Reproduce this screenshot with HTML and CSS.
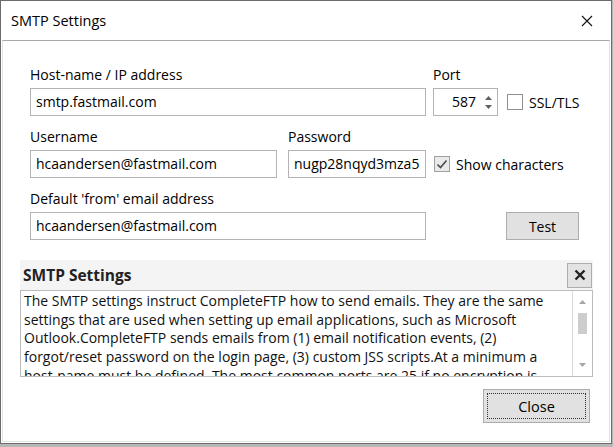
FILE: index.html
```html
<!DOCTYPE html>
<html>
<head>
<meta charset="utf-8">
<link rel="stylesheet" href="styles.css">
</head>
<body>
<div class="window">
  <div class="titlebar">
    <span class="title">SMTP Settings</span>
    <span class="title-close">
      <svg width="12" height="12" viewBox="0 0 12 12"><path d="M1 1 L11 11 M11 1 L1 11" stroke="#111" stroke-width="1.1" fill="none"/></svg>
    </span>
  </div>
  <div class="client">
    <div class="form">
      <div class="row labels">
        <label class="w-wide">Host-name / IP address</label>
        <label class="port-label">Port</label>
      </div>
      <div class="row inputs">
        <div class="field w-wide">smtp.fastmail.com</div>
        <div class="field spinner">
          <span class="spin-val">587</span>
          <span class="spin-arrows">
            <svg width="7" height="4" viewBox="0 0 7 4"><path d="M3.5 0 L7 4 L0 4 Z" fill="#606060"/></svg>
            <svg width="7" height="4" viewBox="0 0 7 4"><path d="M0 0 L7 0 L3.5 4 Z" fill="#606060"/></svg>
          </span>
        </div>
        <span class="check ssl"><span class="box"></span>SSL/TLS</span>
      </div>
      <div class="row labels">
        <label class="w-user">Username</label>
        <label class="pass-label">Password</label>
      </div>
      <div class="row inputs">
        <div class="field w-user">hcaandersen@fastmail.com</div>
        <div class="field w-pass">nugp28nqyd3mza5</div>
        <span class="check show"><span class="box checked"><svg width="12" height="11" viewBox="0 0 12 11"><path d="M1.5 5.5 L4.5 8.5 L10.5 1.5" stroke="#4a4a4a" stroke-width="1.6" fill="none"/></svg></span>Show characters</span>
      </div>
      <div class="row labels">
        <label class="w-wide">Default 'from' email address</label>
      </div>
      <div class="row inputs">
        <div class="field w-wide">hcaandersen@fastmail.com</div>
        <button class="btn test">Test</button>
      </div>
    </div>

    <div class="help">
      <div class="help-head">
        <span class="help-title">SMTP Settings</span>
        <span class="help-x">
          <svg width="12" height="12" viewBox="0 0 12 12"><path d="M1.5 1.5 L10.5 10.5 M10.5 1.5 L1.5 10.5" stroke="#222" stroke-width="2.4" fill="none"/></svg>
        </span>
      </div>
      <div class="help-body">
        <p class="help-text">The SMTP settings instruct CompleteFTP how to send emails. They are the same<br>settings that are used when setting up email applications, such as Microsoft<br>Outlook.CompleteFTP sends emails from (1) email notification events, (2)<br>forgot/reset password on the login page, (3) custom JSS scripts.At a minimum a<br>host-name must be defined. The most common ports are 25 if no encryption is</p>
        <div class="scrollbar">
          <svg class="arr" width="7" height="4" viewBox="0 0 7 4"><path d="M3.5 0 L7 4 L0 4 Z" fill="#a6a6a6"/></svg>
          <div class="thumb"></div>
          <div class="track"></div>
          <svg class="arr" width="7" height="4" viewBox="0 0 7 4"><path d="M0 0 L7 0 L3.5 4 Z" fill="#a6a6a6"/></svg>
        </div>
      </div>
    </div>

    <div class="footer">
      <button class="btn close"><span class="focus">Close</span></button>
    </div>
  </div>
</div>
</body>
</html>
```

FILE: styles.css
```css
* { box-sizing: border-box; }
html, body {
  margin: 0;
  padding: 0;
}
body {
  width: 613px;
  height: 447px;
  overflow: hidden;
  background: #b7b7b7;
  font-family: "Segoe UI", "Open Sans", "Noto Sans", sans-serif;
  font-size: 14px;
  color: #000;
}
.window {
  width: 612px;
  height: 444px;
  border: 1px solid #6b6b6b;
  background: #fff;
  display: flex;
  flex-direction: column;
}
.titlebar {
  height: 39px;
  flex: none;
  display: flex;
  align-items: center;
  justify-content: space-between;
  padding-left: 10px;
  font-size: 14.5px;
}
.title-close {
  width: 46px;
  height: 39px;
  display: flex;
  align-items: center;
  justify-content: center;
  margin-right: 1px;
}
.client {
  flex: 1;
  margin: 0 1px 1px 1px;
  border: 1px solid #e2e2e2;
  border-top: 1px solid #a8a8a8;
  display: flex;
  flex-direction: column;
}
.form {
  margin: 24px 0 0 27px;
  display: flex;
  flex-direction: column;
}
.row {
  display: flex;
  align-items: center;
}
.labels {
  height: 20px;
  line-height: 20px;
  margin-bottom: 3px;
}
.inputs {
  height: 28px;
  margin-bottom: 11px;
}
.inputs:last-child { margin-bottom: 0; }
.w-wide { width: 396px; flex: none; }
.w-user { width: 247px; flex: none; }
.w-pass { width: 138px; flex: none; margin-left: 11px; overflow: hidden; white-space: nowrap; }
.port-label { margin-left: 7px; }
.pass-label { margin-left: 11px; }
.field {
  height: 28px;
  border: 1px solid #b3b3b3;
  background: #fff;
  padding: 0 5px;
  line-height: 26px;
  white-space: nowrap;
  overflow: hidden;
}
.spinner {
  width: 65px;
  margin-left: 7px;
  display: flex;
  align-items: center;
  justify-content: flex-end;
  padding: 0 4px 0 0;
}
.spin-val { margin-right: 8px; }
.spin-arrows {
  display: flex;
  flex-direction: column;
  gap: 5px;
  width: 9px;
  align-items: center;
}
.spin-arrows svg { display: block; }
.check {
  display: flex;
  align-items: center;
  white-space: nowrap;
}
.ssl { margin-left: 9px; }
.show { margin-left: 8px; }
.box {
  width: 16px;
  height: 16px;
  border: 1px solid #8f8f8f;
  background: #fff;
  margin-right: 6px;
  display: flex;
  align-items: center;
  justify-content: center;
}
.box.checked {
  background: #eaeaea;
  border-color: #a0a0a0;
}
.btn {
  font: inherit;
  color: #000;
  background: #e1e1e1;
  border: 1px solid #adadad;
  padding: 0;
  margin: 0;
}
.test {
  width: 73px;
  height: 28px;
  margin-left: 80px;
}
.help {
  margin: 20px 0 0 17px;
  width: 573px;
}
.help-head {
  height: 30px;
  background: #f4f4f4;
  display: flex;
  align-items: center;
  justify-content: space-between;
  padding-left: 3px;
}
.help-title {
  font-weight: bold;
  font-size: 15.5px;
  color: #222;
}
.help-x {
  width: 25px;
  height: 25px;
  background: #e3e3e3;
  border: 1px solid #adadad;
  display: flex;
  align-items: center;
  justify-content: center;
  margin-right: 1px;
}
.help-body {
  height: 87px;
  border: 1px solid #bcbcbc;
  display: flex;
  overflow: hidden;
}
.help-text {
  flex: 1;
  margin: 0;
  padding: 1px 3px 0 3px;
  line-height: 18.7px;
  white-space: nowrap;
  overflow: hidden;
  color: #111;
}
.scrollbar {
  width: 20px;
  flex: none;
  border-left: 1px solid #dadada;
  background: #fff;
  display: flex;
  flex-direction: column;
  align-items: center;
  padding: 9px 0 9px 0;
}
.arr { display: block; flex: none; }
.thumb {
  width: 9px;
  height: 21px;
  background: #cdcdcd;
  margin-top: 9px;
  flex: none;
}
.track { flex: 1; }
.footer {
  display: flex;
  justify-content: flex-end;
  margin-top: 12px;
  padding-right: 19px;
}
.close {
  width: 107px;
  height: 34px;
  padding: 3px;
  border: 1px solid #adadad;
  background: #e1e1e1;
}
.focus {
  display: flex;
  width: 100%;
  height: 100%;
  align-items: center;
  justify-content: center;
  border: 1px dotted #333;
  font-size: 14.5px;
}
```
